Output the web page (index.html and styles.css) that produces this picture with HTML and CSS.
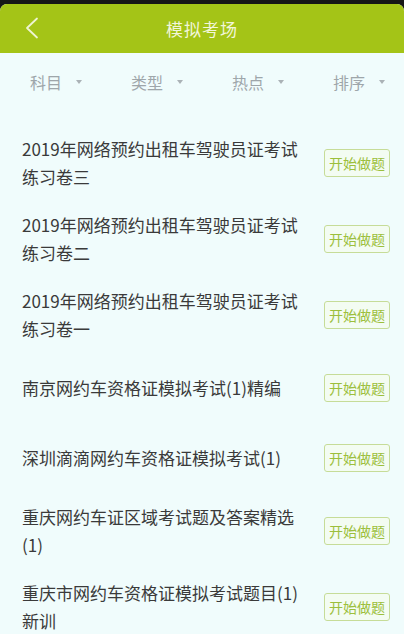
FILE: index.html
```html
<!DOCTYPE html>
<html lang="zh-CN">
<head>
    <meta charset="UTF-8">
    <meta name="viewport" content="width=device-width, initial-scale=1.0">
    <title>模拟考场</title>
    <link rel="stylesheet" href="styles.css">
</head>
<body>

    <div class="screen">
        <div class="header">
            <svg class="back" width="14" height="22" viewBox="0 0 14 22">
                <path d="M12 1.5 L2 11 L12 20.5" fill="none" stroke="#eef4d2" stroke-width="1.8" stroke-linecap="round" stroke-linejoin="round"/>
            </svg>
            <h1>模拟考场</h1>
        </div>

        <div class="filters">
            <div class="filter">科目<span class="caret"></span></div>
            <div class="filter">类型<span class="caret"></span></div>
            <div class="filter">热点<span class="caret"></span></div>
            <div class="filter">排序<span class="caret"></span></div>
        </div>

        <div class="exam-list">
            <div class="exam">
                <p class="exam-title">2019年网络预约出租车驾驶员证考试练习卷三</p>
                <button class="start">开始做题</button>
            </div>
            <div class="exam">
                <p class="exam-title">2019年网络预约出租车驾驶员证考试练习卷二</p>
                <button class="start">开始做题</button>
            </div>
            <div class="exam">
                <p class="exam-title">2019年网络预约出租车驾驶员证考试练习卷一</p>
                <button class="start">开始做题</button>
            </div>
            <div class="exam">
                <p class="exam-title">南京网约车资格证模拟考试(1)精编</p>
                <button class="start">开始做题</button>
            </div>
            <div class="exam">
                <p class="exam-title">深圳滴滴网约车资格证模拟考试(1)</p>
                <button class="start">开始做题</button>
            </div>
            <div class="exam">
                <p class="exam-title">重庆网约车证区域考试题及答案精选(1)</p>
                <button class="start">开始做题</button>
            </div>
            <div class="exam">
                <p class="exam-title">重庆市网约车资格证模拟考试题目(1)新训</p>
                <button class="start">开始做题</button>
            </div>
        </div>
    </div>

</body>
</html>
```

FILE: styles.css
```css
body {
    margin: 0;
    background-color: #161616;
    font-family: "Noto Sans CJK SC", "Noto Sans", sans-serif;
    height: 634px;
    overflow: hidden;
}
.screen {
    margin-top: 4px;
    background-color: #f0fcfc;
    border-radius: 7px 7px 0 0;
    overflow: hidden;
    height: 630px;
}
.header {
    background-color: #a4c417;
    height: 49px;
    display: flex;
    align-items: center;
    justify-content: center;
    position: relative;
}
.header h1 {
    margin: 0;
    font-size: 17px;
    font-weight: normal;
    color: #f2f6da;
    letter-spacing: 1px;
}
.back {
    position: absolute;
    left: 25px;
    top: 13px;
}
.filters {
    display: flex;
    height: 58px;
}
.filter {
    flex: 1;
    display: flex;
    align-items: center;
    padding-left: 30px;
    font-size: 16px;
    color: #9ea6aa;
    gap: 14px;
}
.caret {
    width: 0;
    height: 0;
    border-left: 3.5px solid transparent;
    border-right: 3.5px solid transparent;
    border-top: 4px solid #aab2b6;
}
.exam-list {
    padding-top: 14px;
}
.exam {
    display: flex;
    align-items: center;
    min-height: 50px;
    padding: 10px 14px 10px 22px;
    gap: 17px;
}
.exam-title {
    flex: 1;
    margin: 0;
    font-size: 17px;
    line-height: 28px;
    color: #3a3a3a;
}
.start {
    width: 66px;
    height: 28px;
    flex-shrink: 0;
    padding: 0;
    background-color: #f3fcf2;
    border: 1px solid #c6dc98;
    border-radius: 3px;
    color: #9cbf3c;
    font-family: "Noto Sans CJK SC", sans-serif;
    font-size: 14px;
    cursor: pointer;
}
```
